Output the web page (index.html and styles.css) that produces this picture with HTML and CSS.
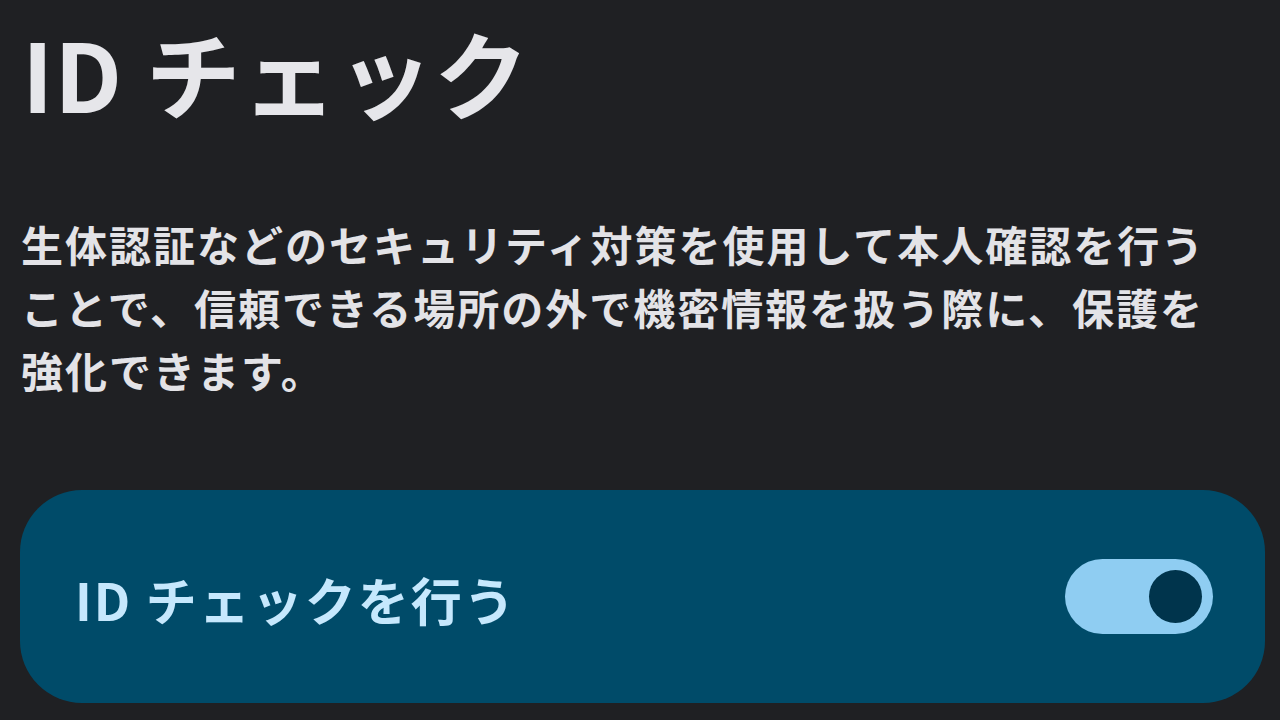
FILE: index.html
```html
<!DOCTYPE html>
<html lang="ja">
<head>
<meta charset="utf-8">
<link rel="stylesheet" href="styles.css">
</head>
<body>
<main class="page">
  <h1 class="title">ID チェック</h1>
  <p class="desc">生体認証などのセキュリティ対策を使用して本人確認を行うことで、信頼できる場所の外で機密情報を扱う際に、保護を強化できます。</p>
  <div class="card">
    <span class="card-label">ID チェックを行う</span>
    <div class="switch"><div class="thumb"></div></div>
  </div>
</main>
</body>
</html>
```

FILE: styles.css
```css
html, body {
  margin: 0;
  padding: 0;
  background: #1f2023;
  width: 1280px;
  height: 720px;
  overflow: hidden;
}
.page {
  display: flex;
  flex-direction: column;
  padding: 14px 15px 0 20px;
  font-family: "Noto Sans CJK JP", "Noto Sans", sans-serif;
}
.title {
  margin: 0 0 0 2px;
  font-size: 95px;
  line-height: 116px;
  font-weight: 700;
  color: #e6e6ea;
  letter-spacing: 1px;
}
.desc {
  margin: 82px 0 0 1px;
  font-size: 42px;
  line-height: 63px;
  font-weight: 700;
  color: #e3e3e7;
  letter-spacing: 2px;
  width: 1210px;
}
.card {
  margin-top: 89px;
  height: 213px;
  border-radius: 62px;
  background: #004b69;
  display: flex;
  align-items: center;
  justify-content: space-between;
  padding: 0 52px 0 55px;
}
.card-label {
  font-size: 51px;
  font-weight: 700;
  color: #c6e8fd;
  letter-spacing: 2px;
  margin-top: 4px;
}
.switch {
  width: 148px;
  height: 75px;
  border-radius: 38px;
  background: #8fcdf2;
  display: flex;
  align-items: center;
  justify-content: flex-end;
  padding-right: 11px;
  box-sizing: border-box;
}
.thumb {
  width: 53px;
  height: 53px;
  border-radius: 50%;
  background: #00344c;
}
```
